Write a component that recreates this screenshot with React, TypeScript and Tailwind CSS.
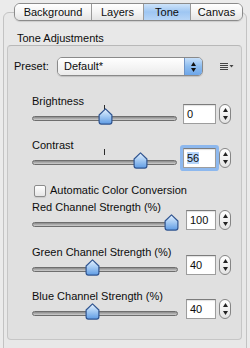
import clsx from "clsx"

function Thumb() {
  return (
    <svg width="15" height="17" viewBox="0 0 15 17">
      <defs>
        <linearGradient id="thumbFill" x1="0" y1="0" x2="0" y2="1">
          <stop offset="0" stopColor="#e6f1fd" />
          <stop offset="0.45" stopColor="#a9cdf4" />
          <stop offset="1" stopColor="#5e9be4" />
        </linearGradient>
      </defs>
      <path
        d="M7.5 0.9 L13.9 7 V13.8 Q13.9 16.1 11.6 16.1 H3.4 Q1.1 16.1 1.1 13.8 V7 Z"
        fill="url(#thumbFill)"
        stroke="#2f5490"
        strokeWidth="1.2"
        strokeLinejoin="round"
      />
    </svg>
  )
}

function Slider({ pct, tick, wide }: { pct: number; tick?: boolean; wide?: boolean }) {
  const travel = (wide ? 146 : 145) - 14
  return (
    <div className={clsx("relative h-[17px]", wide ? "w-[146px]" : "w-[145px]")}>
      <div className="absolute left-0 right-0 top-[8px] h-[5px] rounded-full border border-[#6e6e6e] bg-gradient-to-b from-[#8a8a8a] to-[#cfcfcf]" />
      {tick && <div className="absolute left-[72px] top-[-3px] h-[6px] w-px bg-[#2a2a2a]" />}
      <div className="absolute top-0" style={{ left: (pct / 100) * travel }}>
        <Thumb />
      </div>
    </div>
  )
}

function Stepper() {
  return (
    <div className="ml-[3px] flex h-[20px] w-[12px] flex-col items-center justify-between rounded-[6px] border border-[#858585] bg-gradient-to-b from-white to-[#e3e3e3] py-[3px]">
      <svg width="5" height="4" viewBox="0 0 5 4">
        <path d="M2.5 0 L5 4 H0 Z" fill="#222" />
      </svg>
      <svg width="5" height="4" viewBox="0 0 5 4">
        <path d="M0 0 H5 L2.5 4 Z" fill="#222" />
      </svg>
    </div>
  )
}

function Control({
  label,
  value,
  pct,
  tick,
  wide,
  focus,
}: {
  label: string
  value: string
  pct: number
  tick?: boolean
  wide?: boolean
  focus?: boolean
}) {
  return (
    <div className="ml-[24px] flex items-end">
      <div>
        <div className="h-[13px] leading-[13px]">{label}</div>
        <Slider pct={pct} tick={tick} wide={wide} />
      </div>
      <div
        className={clsx(
          "mb-[1px] h-[20px] border border-[#9d9d9d] border-t-[#7c7c7c] bg-white pl-[3px] leading-[18px] shadow-[inset_0_1px_1px_rgba(0,0,0,0.12)]",
          wide ? "ml-[8px] w-[30px]" : "ml-[6px] w-[33px]",
          focus && "rounded-[1px] ring-[3px] ring-[#8db8ee]"
        )}
      >
        {focus ? <span className="bg-[#b6d5fa]">{value}</span> : value}
      </div>
      <div className="mb-[1px]">
        <Stepper />
      </div>
    </div>
  )
}

export default function App() {
  const tabs = [
    { name: "Background", w: "w-[76px]" },
    { name: "Layers", w: "w-[52px]" },
    { name: "Tone", w: "w-[47px]" },
    { name: "Canvas", w: "w-[52px]" },
  ]

  return (
    <div className="h-[348px] w-[250px] overflow-hidden bg-[#ebebeb] pt-[3px] font-['Liberation_Sans',Arial,sans-serif] text-[11px] text-[#0d0d0d]">
      {/* tab bar */}
      <div className="relative z-10 ml-[14px] flex h-[18px] w-fit overflow-hidden rounded-[6px] border border-[#8b8b8b] shadow-[0_1px_1px_rgba(0,0,0,0.12)]">
        {tabs.map((t, i) => (
          <div
            key={t.name}
            className={clsx(
              "shrink-0 text-center leading-[16px]",
              t.w,
              i > 0 && "border-l border-[#9a9a9a]",
              t.name === "Tone"
                ? "bg-gradient-to-b from-[#cde3fa] via-[#9ec6f2] to-[#b7d5f6]"
                : "bg-gradient-to-b from-white via-[#f4f4f4] to-[#e4e4e4]"
            )}
          >
            {t.name}
          </div>
        ))}
      </div>

      {/* outer group box */}
      <div className="-mt-[9px] ml-[3px] h-[400px] w-[244px] rounded-[6px] border border-[#c3c3c3] bg-[#e8e8e8] pt-[19px]">
        <div className="pl-[13px] leading-[13px]">Tone Adjustments</div>

        {/* inner box */}
        <div className="ml-[3px] w-[235px] rounded-[4px] border border-[#c6c6c6] border-t-[#b8b8b8] bg-[#e0e0e0] pb-[19px] pt-[11px]">
          <div className="ml-[6px] flex h-[19px] items-center">
            <span className="w-[43px]">Preset:</span>
            <div className="flex h-[19px] w-[146px] overflow-hidden rounded-[5px] border border-[#8a8a8a] shadow-[0_1px_1px_rgba(0,0,0,0.15)]">
              <div className="flex-1 bg-gradient-to-b from-white to-[#ebebeb] pl-[6px] leading-[17px]">Default*</div>
              <div className="flex w-[18px] flex-col items-center justify-center gap-[2px] border-l border-[#6f93c4] bg-gradient-to-b from-[#c7e0fa] via-[#8cbcef] to-[#6ea6e9]">
                <svg width="5" height="4" viewBox="0 0 5 4">
                  <path d="M2.5 0 L5 4 H0 Z" fill="#111" />
                </svg>
                <svg width="5" height="4" viewBox="0 0 5 4">
                  <path d="M0 0 H5 L2.5 4 Z" fill="#111" />
                </svg>
              </div>
            </div>
            <svg className="ml-[17px]" width="14" height="8" viewBox="0 0 14 8">
              <rect x="0" y="0" width="8" height="1" fill="#444" />
              <rect x="0" y="2" width="8" height="1" fill="#444" />
              <rect x="0" y="4" width="8" height="1" fill="#444" />
              <rect x="0" y="6" width="8" height="1" fill="#444" />
              <path d="M9.5 2 H13.5 L11.5 4.5 Z" fill="#444" />
            </svg>
          </div>

          <div className="mt-[19px]">
            <Control label="Brightness" value="0" pct={50} tick />
          </div>
          <div className="mt-[14px]">
            <Control label="Contrast" value="56" pct={77} tick focus />
          </div>

          <div className="ml-[26px] mt-[15px] flex h-[13px] items-center">
            <div className="h-[12px] w-[12px] rounded-[2px] border border-[#8c8c8c] bg-gradient-to-b from-white to-[#e6e6e6] shadow-[0_1px_1px_rgba(0,0,0,0.1)]" />
            <span className="ml-[4px] leading-[13px]">Automatic Color Conversion</span>
          </div>

          <div className="mt-[4px]">
            <Control label="Red Channel Strength (%)" value="100" pct={100} wide />
          </div>
          <div className="mt-[15px]">
            <Control label="Green Channel Strength (%)" value="40" pct={40} wide />
          </div>
          <div className="mt-[14px]">
            <Control label="Blue Channel Strength (%)" value="40" pct={40} wide />
          </div>
        </div>
      </div>
    </div>
  )
}
